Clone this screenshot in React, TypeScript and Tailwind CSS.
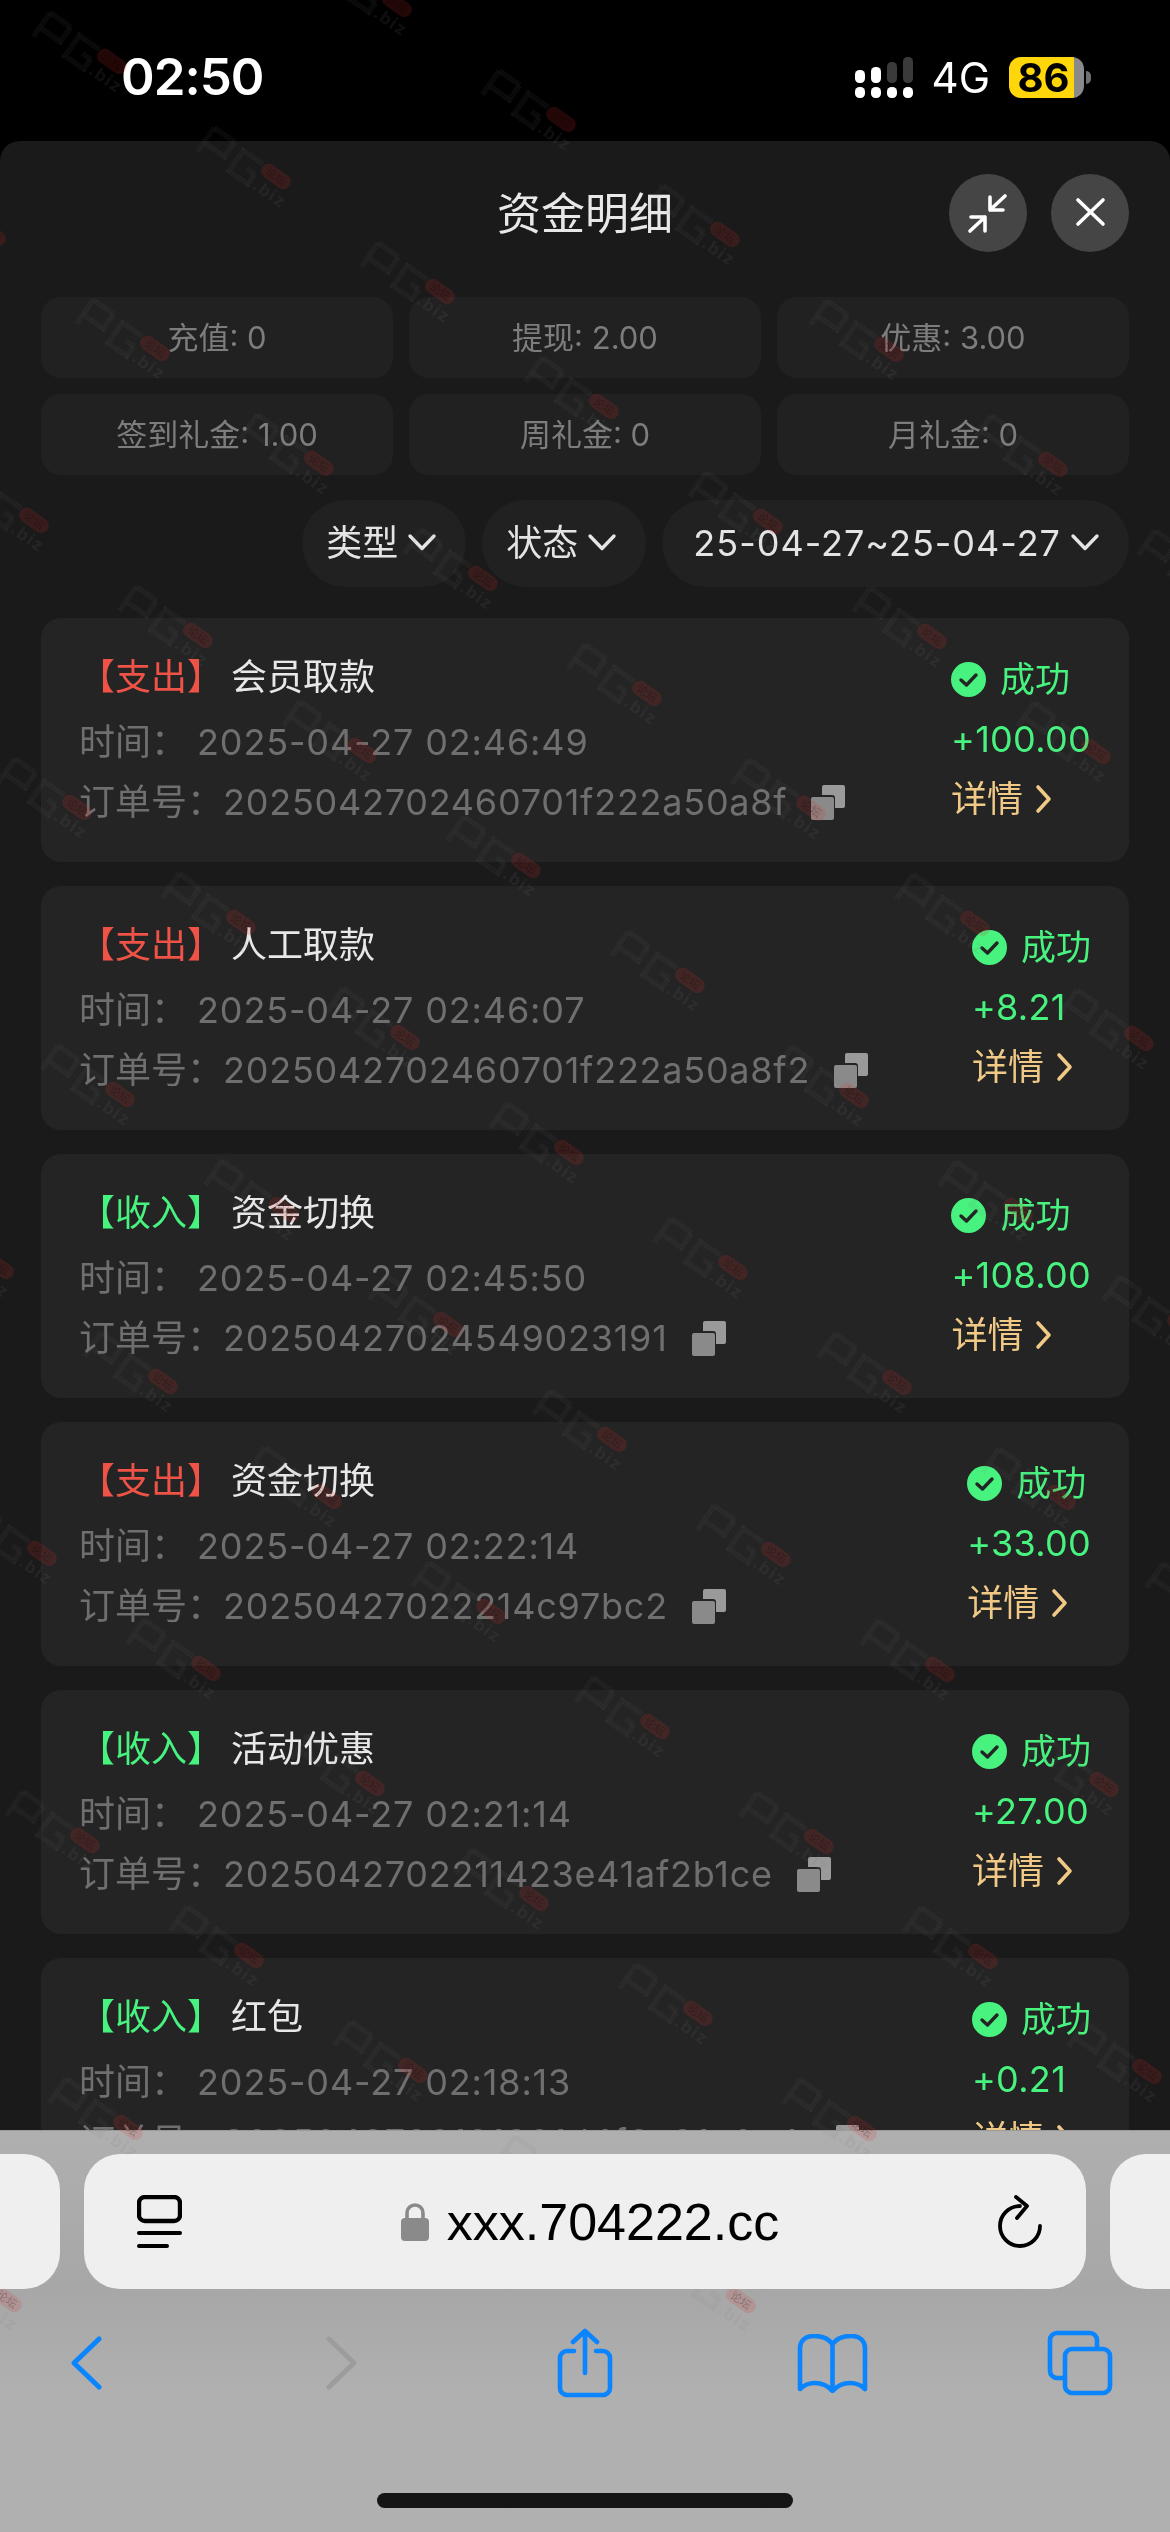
import React from "react";

type Row = { kind: "支出" | "收入"; title: string; time: string; order: string; amount: string };

const rows: Row[] = [
  { kind: "支出", title: "会员取款", time: "2025-04-27 02:46:49", order: "2025042702460701f222a50a8f", amount: "+100.00" },
  { kind: "支出", title: "人工取款", time: "2025-04-27 02:46:07", order: "2025042702460701f222a50a8f2", amount: "+8.21" },
  { kind: "收入", title: "资金切换", time: "2025-04-27 02:45:50", order: "20250427024549023191", amount: "+108.00" },
  { kind: "支出", title: "资金切换", time: "2025-04-27 02:22:14", order: "20250427022214c97bc2", amount: "+33.00" },
  { kind: "收入", title: "活动优惠", time: "2025-04-27 02:21:14", order: "2025042702211423e41af2b1ce", amount: "+27.00" },
  { kind: "收入", title: "红包", time: "2025-04-27 02:18:13", order: "2025042702181301d4f2a81e0c4", amount: "+0.21" },
];

const stats = ["充值: 0", "提现: 2.00", "优惠: 3.00", "签到礼金: 1.00", "周礼金: 0", "月礼金: 0"];

function Chevron() {
  return (
    <svg width="30" height="20" viewBox="0 0 30 20" fill="none" stroke="#e5e5e5" strokeWidth="3.4" strokeLinecap="round" strokeLinejoin="round" className="shrink-0">
      <path d="M3 3 L15 15.5 L27 3" />
    </svg>
  );
}

function Filter({ label, wide }: { label: string; wide?: boolean }) {
  return (
    <div className={wide ? "flex h-[87px] items-center rounded-full bg-[#212121] pb-[2px] pl-[31px] pr-[29px] text-[36px] tracking-[1px] text-[#e4e4e4]" : "flex h-[87px] items-center rounded-full bg-[#212121] pb-[2px] pl-[24px] pr-[29px] text-[36px] text-[#e4e4e4]"}>
      <span>{label}</span>
      <span className="ml-[9px]">
        <Chevron />
      </span>
    </div>
  );
}

function Copy() {
  return (
    <svg width="35" height="35" viewBox="0 0 35 35" className="shrink-0">
      <rect x="12" y="0" width="23" height="23" rx="2" fill="#9a9a9a" />
      <rect x="-1" y="10" width="26" height="26" rx="3" fill="#242424" />
      <rect x="1" y="12" width="23" height="23" rx="2" fill="#8a8a8a" />
    </svg>
  );
}

function Card({ row }: { row: Row }) {
  const green = row.kind === "收入";
  return (
    <div className="flex h-[244px] shrink-0 justify-between rounded-[20px] bg-[#242424] pl-[38px] pr-[38px] pt-[28px]">
      <div className="min-w-0">
        <div className="flex h-[62px] items-center text-[36px]">
          <span className={green ? "text-[#47f27f]" : "text-[#ef5246]"}>【{row.kind}】</span>
          <span className="ml-[8px] text-[#e8e8e8]">{row.title}</span>
        </div>
        <div className="mt-[4px] flex h-[60px] items-center text-[36px] text-[#6f6f6f]">
          <span>时间：</span>
          <span className="ml-[10px] tracking-[0.85px]">{row.time}</span>
        </div>
        <div className="flex h-[60px] items-center text-[36px] text-[#6f6f6f]">
          <span>订单号：</span>
          <span className="tracking-[0.75px]">{row.order}</span>
          <span className="ml-[23px]">
            <Copy />
          </span>
        </div>
      </div>
      <div className="mt-[3px] flex shrink-0 flex-col items-start">
        <div className="flex h-[60px] items-center">
          <svg width="35" height="35" viewBox="0 0 35 35" className="shrink-0">
            <circle cx="17.5" cy="17.5" r="17.5" fill="#47f27f" />
            <path d="M10 18 L15.5 23 L25 13" fill="none" stroke="#242424" strokeWidth="3.4" strokeLinecap="round" strokeLinejoin="round" />
          </svg>
          <span className="ml-[14px] text-[35px] text-[#47f27f]">成功</span>
        </div>
        <div className="flex h-[60px] items-center text-[36px] tracking-[0.3px] text-[#47f27f]">{row.amount}</div>
        <div className="flex h-[60px] items-center text-[36px] text-[#f0c987]">
          <span>详情</span>
          <svg width="17" height="32" viewBox="0 0 17 32" fill="none" stroke="#f0c987" strokeWidth="3.6" strokeLinecap="round" strokeLinejoin="round" className="ml-[12px] shrink-0">
            <path d="M3 4 L14 16 L3 28" />
          </svg>
        </div>
      </div>
    </div>
  );
}

function Mark({ x, y }: { x: number; y: number }) {
  return (
    <g transform={`translate(${x} ${y}) rotate(35)`}>
      <g className="mix-blend-difference" fill="none" stroke="#ffffff" strokeOpacity="0.06" strokeWidth="5.5" strokeDasharray="1.4 0.7">
        <path d="M-12 15 V-14 H13 V4 H-12" />
        <path d="M49 -12 H25 V13 H48 V1 H38" />
      </g>
      <rect x="50" y="-17" width="33" height="15" rx="7.5" fill="#e0302a" fillOpacity="0.16" />
      <text x="66.5" y="-5.5" textAnchor="middle" fontSize="11" fill="#000000" fillOpacity="0.25">论坛</text>
      <text x="53" y="14" fontSize="17" fontWeight="700" fill="#ffffff" fillOpacity="0.06" className="mix-blend-difference" letterSpacing="1.5">.biz</text>
    </g>
  );
}

function Watermarks() {
  const marks: { x: number; y: number }[] = [];
  for (let j = -1; j < 11; j++) {
    for (let i = -5; i < 9; i++) {
      const x = 52 + i * 164 + j * 43;
      const y = 31 + i * 115 + j * 287;
      if (x > -90 && x < 1260 && y > -60 && y < 2300) marks.push({ x, y });
    }
  }
  return (
    <svg width="1170" height="2532" viewBox="0 0 1170 2532" className="pointer-events-none absolute left-0 top-0">
      {marks.map((m) => (
        <Mark key={`${m.x}-${m.y}`} x={m.x} y={m.y} />
      ))}
    </svg>
  );
}

function StatusBar() {
  return (
    <div className="flex h-[141px] shrink-0 items-start justify-between bg-black pl-[121px] pr-[79px] pt-[46px]">
      <span className="text-[51px] font-semibold leading-[62px] tracking-[-1px] text-white">02:50</span>
      <div className="flex items-center pt-[11px]">
        <svg width="58" height="41" viewBox="0 0 58 41">
          <rect x="0" y="30" width="10" height="11" rx="4.5" fill="#fff" />
          <rect x="16" y="30" width="10" height="11" rx="4.5" fill="#fff" />
          <rect x="32" y="30" width="10" height="11" rx="4.5" fill="#fff" />
          <rect x="48" y="30" width="10" height="11" rx="4.5" fill="#fff" />
          <rect x="0" y="13" width="10" height="13" rx="4.5" fill="#fff" />
          <rect x="16" y="10" width="10" height="16" rx="4.5" fill="#fff" />
          <rect x="32" y="5" width="10" height="21" rx="4.5" fill="#3a3a3a" />
          <rect x="48" y="0" width="10" height="26" rx="4.5" fill="#3a3a3a" />
        </svg>
        <span className="ml-[19px] text-[42px] leading-[41px] text-white">4G</span>
        <div className="ml-[19px] flex h-[41px] w-[75px] overflow-hidden rounded-[12px]">
          <div className="flex w-[65px] items-center justify-center bg-[#ffd60a] pl-[4px] text-[40px] font-bold text-black">86</div>
          <div className="w-[10px] bg-[#8a8a8a]" />
        </div>
        <div className="ml-[2px] h-[13px] w-[5px] rounded-r-full bg-[#6f6f6f]" />
      </div>
    </div>
  );
}

function Header() {
  return (
    <div className="grid grid-cols-[1fr_auto_1fr] items-center">
      <div />
      <div className="pt-[2px] text-[44px] text-[#e8e8e8]">资金明细</div>
      <div className="flex justify-end gap-[24px]">
        <div className="h-[78px] w-[78px] rounded-full bg-[#454545]">
          <svg width="78" height="78" viewBox="0 0 78 78" fill="none" stroke="#fff" strokeWidth="3.6" strokeLinecap="round" strokeLinejoin="round">
            <path d="M21 57 L36 43 M22 43 H36 V57" />
            <path d="M56 22 L41 36 M41 23 V36 H54" />
          </svg>
        </div>
        <div className="h-[78px] w-[78px] rounded-full bg-[#454545]">
          <svg width="78" height="78" viewBox="0 0 78 78" fill="none" stroke="#fff" strokeWidth="3.6" strokeLinecap="round">
            <path d="M27 26 L52 50 M52 26 L27 50" />
          </svg>
        </div>
      </div>
    </div>
  );
}

function Toolbar() {
  const blue = "#0a84ff";
  return (
    <div className="flex h-[402px] shrink-0 flex-col border-t border-[#9a9a9a] bg-gradient-to-b from-[#afafaf] via-[#a7a7a7] via-40% to-[#b0b0b0] to-65% pt-[23px]">
      <div className="relative z-10 flex h-[135px] shrink-0 gap-[24px] overflow-hidden">
        <div className="ml-[-40px] w-[100px] shrink-0 rounded-[36px] bg-[#efefef]" />
        <div className="flex w-[1002px] shrink-0 items-center justify-between rounded-[36px] bg-[#efefef] pl-[53px] pr-[44px]">
          <svg width="45" height="54" viewBox="0 0 45 54" fill="none" stroke="#000" className="shrink-0">
            <rect x="2" y="2" width="41" height="24" rx="6" strokeWidth="4.4" />
            <path d="M2 38 H43" strokeWidth="4" strokeLinecap="round" />
            <path d="M2 51 H30" strokeWidth="4" strokeLinecap="round" />
          </svg>
          <div className="flex items-center">
            <svg width="28" height="38" viewBox="0 0 28 38" className="shrink-0">
              <path d="M6 17 V10 a8 8 0 0 1 16 0 V17" fill="none" stroke="#8a8a8a" strokeWidth="3.6" />
              <rect x="0" y="15" width="28" height="23" rx="4" fill="#8a8a8a" />
            </svg>
            <span className="ml-[18px] font-['Liberation_Sans',sans-serif] text-[52px] leading-[60px] text-black">xxx.704222.cc</span>
          </div>
          <svg width="44" height="53" viewBox="0 0 44 53" fill="none" stroke="#000" strokeWidth="3.8" strokeLinecap="round" strokeLinejoin="round" className="shrink-0">
            <path d="M22 11 A20 20 0 1 0 42 31" />
            <path d="M18 2 L29 11 L19 23" />
          </svg>
        </div>
        <div className="w-[100px] shrink-0 rounded-[36px] bg-[#efefef]" />
      </div>
      <div className="relative z-10 mt-[31px] flex h-[86px] shrink-0 items-center">
        <svg width="31" height="54" viewBox="0 0 31 54" fill="none" stroke={blue} strokeWidth="5" strokeLinecap="round" strokeLinejoin="round" className="ml-[71px] shrink-0">
          <path d="M28 3 L3 27 L28 51" />
        </svg>
        <svg width="31" height="54" viewBox="0 0 31 54" fill="none" stroke="#9c9c9c" strokeWidth="5" strokeLinecap="round" strokeLinejoin="round" className="ml-[224px] shrink-0">
          <path d="M3 3 L28 27 L3 51" />
        </svg>
        <svg width="56" height="70" viewBox="0 0 56 70" fill="none" stroke={blue} strokeWidth="4.6" strokeLinecap="round" strokeLinejoin="round" className="ml-[200px] shrink-0">
          <path d="M17 23 H10 a7 7 0 0 0 -7 7 V60 a7 7 0 0 0 7 7 H46 a7 7 0 0 0 7 -7 V30 a7 7 0 0 0 -7 -7 H39" />
          <path d="M28 45 V4 M16 14 L28 3 L40 14" />
        </svg>
        <svg width="71" height="59" viewBox="0 0 71 59" fill="none" stroke={blue} strokeWidth="4.6" strokeLinecap="round" strokeLinejoin="round" className="ml-[184px] shrink-0">
          <path d="M35.5 10 C31 4 24 2 17 2 C8 2 3 7 3 15 V55 C8 50 13 49 18 49 C26 49 31 52 35.5 57 C40 52 45 49 53 49 C58 49 63 50 68 55 V15 C68 7 63 2 54 2 C47 2 40 4 35.5 10 Z M35.5 10 V55" />
        </svg>
        <svg width="66" height="66" viewBox="0 0 66 66" fill="none" stroke={blue} strokeWidth="4.6" strokeLinecap="round" strokeLinejoin="round" className="ml-[179px] shrink-0">
          <path d="M50 18 V10 a7 7 0 0 0 -7 -7 H10 a7 7 0 0 0 -7 7 V41 a7 7 0 0 0 7 7 H18" />
          <rect x="18" y="19" width="45" height="44" rx="7" />
        </svg>
      </div>
      <div className="mx-auto mt-[87px] h-[15px] w-[416px] shrink-0 rounded-full bg-[#151515]" />
    </div>
  );
}

export default function App() {
  return (
    <div className="relative flex h-[2532px] w-[1170px] flex-col overflow-hidden bg-black font-[Inter,'Noto_Sans_CJK_SC',sans-serif]">
      <StatusBar />
      <div className="min-h-0 flex-1 overflow-hidden rounded-t-[20px] bg-[#1a1a1a] px-[41px] pt-[33px]">
        <Header />
        <div className="mt-[45px] grid grid-cols-3 gap-x-[16px] gap-y-[16px]">
          {stats.map((s) => (
            <div key={s} className="flex h-[81px] items-center justify-center rounded-[20px] bg-[#212121] pt-[2px] text-[31px] text-[#7d7d7d]">
              {s}
            </div>
          ))}
        </div>
        <div className="mt-[25px] flex justify-end gap-[16px]">
          <Filter label="类型" />
          <Filter label="状态" />
          <Filter label="25-04-27~25-04-27" wide />
        </div>
        <div className="mt-[31px] flex flex-col gap-[24px]">
          {rows.map((r) => (
            <Card key={r.time} row={r} />
          ))}
        </div>
      </div>
      <Toolbar />
      <Watermarks />
    </div>
  );
}
